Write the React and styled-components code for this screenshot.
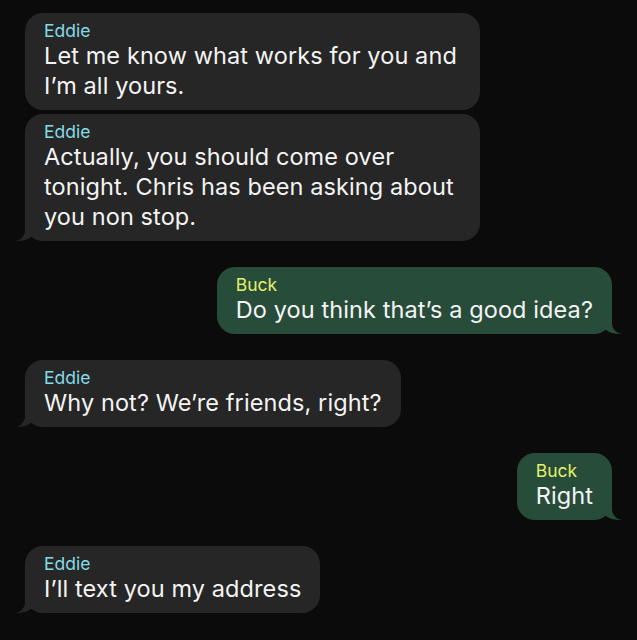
import React from 'react';
import styled, { createGlobalStyle, css } from 'styled-components';

const PAGE = '#0b0b0b';

const messages = [
  { from: 'Eddie', text: 'Let me know what works for you and I’m all yours.', tail: false },
  { from: 'Eddie', text: 'Actually, you should come over tonight. Chris has been asking about you non stop.', tail: true },
  { from: 'Buck', text: 'Do you think that’s a good idea?', tail: true, me: true },
  { from: 'Eddie', text: 'Why not? We’re friends, right?', tail: true },
  { from: 'Buck', text: 'Right', tail: true, me: true },
  { from: 'Eddie', text: 'I’ll text you my address', tail: true },
];

const App = () => {
  return (
    <>
      <GlobalStyle />
      <Thread>
        {messages.map((m, i) => (
          <Bubble key={i} me={m.me} tail={m.tail} grouped={messages[i + 1] && messages[i + 1].from === m.from}>
            <Sender me={m.me}>{m.from}</Sender>
            <Text>{m.text}</Text>
          </Bubble>
        ))}
      </Thread>
    </>
  );
};

export default App;

const GlobalStyle = createGlobalStyle`
  html, body {
    margin: 0;
    background: ${PAGE};
  }
  body {
    font-family: Inter, "Liberation Sans", sans-serif;
    -webkit-font-smoothing: antialiased;
  }
`;

const Thread = styled.div`
  display: flex;
  flex-direction: column;
  padding: 13px 25px 20px;
  min-height: 640px;
  box-sizing: border-box;
`;

const Bubble = styled.div`
  position: relative;
  box-sizing: border-box;
  max-width: 455px;
  padding: 8px 19px 9px;
  border-radius: 18px;
  background: ${(p) => (p.me ? '#284c3a' : '#262626')};
  align-self: ${(p) => (p.me ? 'flex-end' : 'flex-start')};
  margin-bottom: ${(p) => (p.grouped ? '4px' : '26px')};

  ${(p) =>
    p.tail &&
    css`
      &::before,
      &::after {
        content: '';
        position: absolute;
        bottom: 0;
        height: 24px;
      }
      &::before {
        width: 22px;
        background: ${p.me ? '#284c3a' : '#262626'};
        ${p.me
          ? css`
              right: -10px;
              border-bottom-left-radius: 18px 15px;
            `
          : css`
              left: -10px;
              border-bottom-right-radius: 18px 15px;
            `}
      }
      &::after {
        width: 24px;
        background: ${PAGE};
        ${p.me
          ? css`
              right: -24px;
              border-bottom-left-radius: 11px;
            `
          : css`
              left: -24px;
              border-bottom-right-radius: 11px;
            `}
      }
    `}
`;

const Sender = styled.div`
  font-size: 17.5px;
  line-height: 20px;
  color: ${(p) => (p.me ? '#e2f26b' : '#84dbe8')};
`;

const Text = styled.div`
  font-size: 23.5px;
  line-height: 30px;
  color: #f4f4f4;
  letter-spacing: 0.1px;
`;
